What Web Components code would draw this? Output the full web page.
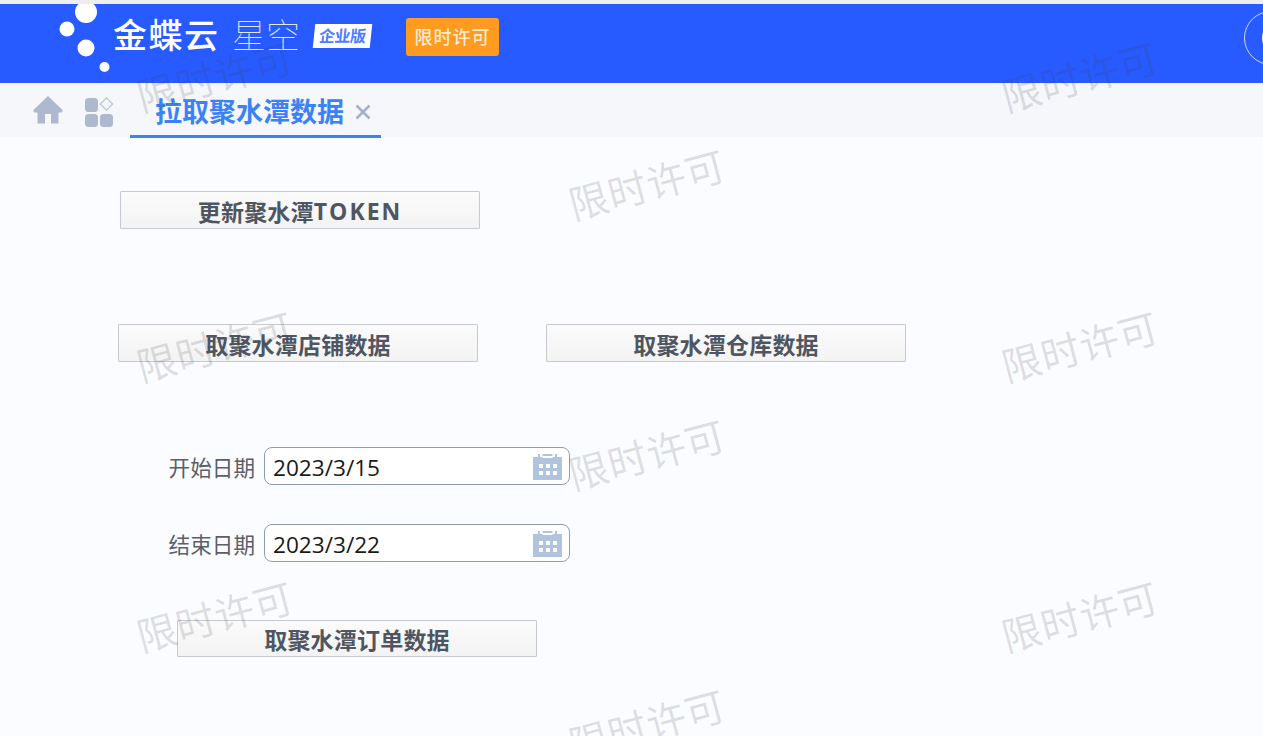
<!DOCTYPE html>
<html lang="zh">
<head>
<meta charset="utf-8">
<title>拉取聚水潭数据</title>
<style>
    html, body {
        margin: 0;
        height: 100%;
        overflow: hidden;
        background: #fbfcff;
        font-family: "Open Sans", "Noto Sans CJK SC", sans-serif;
    }
    .row {
        display: flex;
        flex-flow: row nowrap;
        margin-top: 95px;
    }
    .latin {
        letter-spacing: 2px;
    }
    main {
        display: block;
        height: 599px;
        overflow: hidden;
    }
</style>
</head>
<body>
<app-header></app-header>
<tab-bar label="拉取聚水潭数据"></tab-bar>
<main>
    <action-button style="--left: 120px; --top: 54px">更新聚水潭<span class="latin">TOKEN</span></action-button>
    <div class="row">
        <action-button style="--left: 118px">取聚水潭店铺数据</action-button>
        <action-button style="--left: 68px">取聚水潭仓库数据</action-button>
    </div>
    <date-field label="开始日期" value="2023/3/15" style="--top: 85px"></date-field>
    <date-field label="结束日期" value="2023/3/22" style="--top: 39px"></date-field>
    <action-button style="--left: 177px; --top: 58px; --height: 37px">取聚水潭订单数据</action-button>
</main>
<water-marks></water-marks>

<script>
class AppHeader extends HTMLElement {
    constructor() {
        super();
        this.attachShadow({mode: 'open'});
        this.shadowRoot.innerHTML = `
            <style>
                :host {
                    box-sizing: border-box;
                    display: flex;
                    align-items: center;
                    height: 83px;
                    padding-bottom: 12px;
                    border-top: 4px solid #eeeeee;
                    background: #285bff;
                    color: #fff;
                    overflow: hidden;
                }
                .dots {
                    flex: none;
                    align-self: flex-start;
                    width: 52px;
                    height: 79px;
                    margin-left: 60px;
                    overflow: visible;
                }
                .name {
                    margin: 0 0 5px 1px;
                    width: 119px;
                    font-size: 34px;
                    line-height: 40px;
                    font-weight: 500;
                    letter-spacing: 1.5px;
                    white-space: nowrap;
                }
                .sub {
                    width: 81px;
                    margin-bottom: 5px;
                    font-size: 34px;
                    line-height: 40px;
                    font-weight: 100;
                    color: #dfe7ff;
                    white-space: nowrap;
                }
                .edition {
                    flex: none;
                    width: 57px;
                    height: 24px;
                    margin: 0 0 4px 1px;
                    background: #fff;
                    color: #4f7dff;
                    font-size: 16px;
                    line-height: 24px;
                    font-weight: 700;
                    text-align: center;
                    transform: skewX(-6deg);
                    white-space: nowrap;
                }
                .edition span {
                    display: block;
                    letter-spacing: -.5px;
                }
                .license {
                    flex: none;
                    margin: 0 0 1px 35px;
                    width: 93px;
                    height: 38px;
                    border-radius: 3px;
                    background: #ff9b1e;
                    color: #ffe9cf;
                    font-size: 18px;
                    line-height: 38px;
                    font-weight: 500;
                    text-align: center;
                    letter-spacing: 1px;
                }
                .avatar {
                    flex: none;
                    box-sizing: border-box;
                    width: 54px;
                    height: 54px;
                    margin-left: auto;
                    margin-right: -35px;
                    border: 1px solid #c9d6ff;
                    border-radius: 50%;
                    display: flex;
                    align-items: center;
                    padding-left: 17px;
                }
                .avatar i {
                    display: block;
                    width: 12px;
                    height: 22px;
                    border-radius: 50%;
                    background: #eef2ff;
                }
            </style>
            <svg class="dots" viewBox="0 0 52 79">
                <circle cx="26" cy="8" r="11" fill="#fff"/>
                <circle cx="7" cy="25" r="7.500" fill="#fff"/>
                <circle cx="26" cy="44" r="8.500" fill="#fff"/>
                <circle cx="44.500" cy="63" r="5" fill="#fff"/>
            </svg>
            <div class="name">金蝶云</div>
            <div class="sub">星空</div>
            <div class="edition"><span>企业版</span></div>
            <div class="license">限时许可</div>
            <div class="avatar"><i></i></div>
        `;
    }
}
customElements.define("app-header", AppHeader);

class TabBar extends HTMLElement {
    constructor() {
        super();
        this.attachShadow({mode: 'open'});
        this.shadowRoot.innerHTML = `
            <style>
                :host {
                    display: flex;
                    align-items: flex-start;
                    height: 54px;
                    background: #f5f7fb;
                }
                svg { display: block; flex: none; }
                .home { margin: 13px 0 0 33px; }
                .apps { margin: 14px 0 0 22px; }
                .tab {
                    box-sizing: border-box;
                    display: flex;
                    align-items: center;
                    height: 55px;
                    width: 251px;
                    margin-left: 16px;
                    padding: 2px 0 0 25px;
                    border-bottom: 3px solid #3b82f6;
                    color: #3b82f6;
                    font-size: 27px;
                    font-weight: 700;
                    white-space: nowrap;
                }
                .close { margin: 3px 0 0 11px; }
            </style>
            <svg class="home" width="30" height="28" viewBox="0 0 30 28">
                <path d="M15 0 L29.500 14 Q30 16.500 28 16.500 H25.500 V27.500 H18 V18 H12 V27.500 H4.500 V16.500 H2 Q0 16.500 .5 14 Z" fill="#aeb9d0"/>
            </svg>
            <svg class="apps" width="29" height="30" viewBox="0 0 29 30">
                <rect x="0" y="1" width="13" height="14" rx="3.500" fill="#aeb9d0"/>
                <rect x="0" y="17" width="13" height="13" rx="3.500" fill="#aeb9d0"/>
                <rect x="15" y="17" width="13" height="13" rx="3.500" fill="#aeb9d0"/>
                <path d="M21.500 .8 L27.700 7 L21.500 13.200 L15.300 7 Z" fill="none" stroke="#b9c3d7" stroke-width="1.200"/>
            </svg>
            <div class="tab">
                <span></span>
                <svg class="close" width="16" height="16" viewBox="0 0 16 16">
                    <path d="M1.500 1.500 L14.500 14.500 M14.500 1.500 L1.500 14.500" stroke="#a5b1c6" stroke-width="2.600"/>
                </svg>
            </div>
        `;
        this.shadowRoot.querySelector(".tab span").textContent = this.getAttribute("label");
    }
}
customElements.define("tab-bar", TabBar);

class ActionButton extends HTMLElement {
    constructor() {
        super();
        this.attachShadow({mode: 'open'});
        this.shadowRoot.innerHTML = `
            <style>
                :host {
                    box-sizing: border-box;
                    flex: none;
                    display: flex;
                    align-items: center;
                    justify-content: center;
                    width: 360px;
                    height: var(--height, 38px);
                    margin: var(--top, 0) 0 0 var(--left, 0);
                    padding-top: 1px;
                    border: 1px solid #c8c9d0;
                    border-radius: 1px;
                    background: linear-gradient(#fbfbfb, #f3f3f3);
                    color: #4f5561;
                    font-size: 23px;
                    font-weight: 700;
                    letter-spacing: .2px;
                    white-space: nowrap;
                }
            </style>
            <slot></slot>
        `;
    }
}
customElements.define("action-button", ActionButton);

class DateField extends HTMLElement {
    constructor() {
        super();
        this.attachShadow({mode: 'open'});
        this.shadowRoot.innerHTML = `
            <style>
                :host {
                    display: flex;
                    align-items: center;
                    margin-top: var(--top, 0);
                    height: 38px;
                }
                label {
                    box-sizing: border-box;
                    width: 264px;
                    padding-right: 9px;
                    text-align: right;
                    color: #5a5f6a;
                    font-size: 21.600px;
                }
                .box {
                    box-sizing: border-box;
                    display: flex;
                    align-items: center;
                    justify-content: space-between;
                    width: 306px;
                    height: 38px;
                    padding: 0 7px 0 8px;
                    border: 1px solid #8f9bb5;
                    border-radius: 8px;
                    background: #fff;
                    color: #1a1a1a;
                    font-size: 22.600px;
                }
                .box span { padding-top: 2px; }
                svg { display: block; flex: none; margin-top: 1px; }
            </style>
            <label></label>
            <div class="box">
                <span></span>
                <svg width="29" height="27" viewBox="0 0 29 27">
                    <path d="M0 4 H5 V1 H7 V4 H22 V1 H24 V4 H29 V27 H0 Z" fill="#b0c4e0"/>
                    <path d="M9.500 4 H19.500" stroke="#fff" stroke-width="2"/>
                    <path d="M9.500 2 H19.500" stroke="#b0c4e0" stroke-width="2"/>
                    <g fill="#fff">
                        <rect x="6" y="11" width="4" height="4"/><rect x="13" y="11" width="4" height="4"/><rect x="20" y="11" width="4" height="4"/>
                        <rect x="6" y="18" width="4" height="4"/><rect x="13" y="18" width="4" height="4"/><rect x="20" y="18" width="4" height="4"/>
                    </g>
                </svg>
            </div>
        `;
        this.shadowRoot.querySelector("label").textContent = this.getAttribute("label");
        this.shadowRoot.querySelector(".box span").textContent = this.getAttribute("value");
    }
}
customElements.define("date-field", DateField);

// watermark tiles lie over everything, two staggered columns repeated down the page
class WaterMarks extends HTMLElement {
    constructor() {
        super();
        this.attachShadow({mode: 'open'});
        let spots = [
            [215, 77], [1080, 77], [647, 185],
            [215, 347], [1080, 347], [647, 455],
            [215, 617], [1080, 617], [647, 725]
        ];
        this.shadowRoot.innerHTML = `
            <style>
                :host {
                    position: absolute;
                    inset: 0;
                    overflow: hidden;
                    pointer-events: none;
                }
                span {
                    position: absolute;
                    transform: translate(-50%, -50%) rotate(-15deg);
                    color: rgba(60, 60, 70, .16);
                    font-size: 39.500px;
                    line-height: 46px;
                    letter-spacing: .5px;
                    white-space: nowrap;
                }
            </style>
            ${spots.map(s => `<span style="left:${s[0]}px;top:${s[1]}px">限时许可</span>`).join("")}
        `;
    }
}
customElements.define("water-marks", WaterMarks);
</script>
</body>
</html>
